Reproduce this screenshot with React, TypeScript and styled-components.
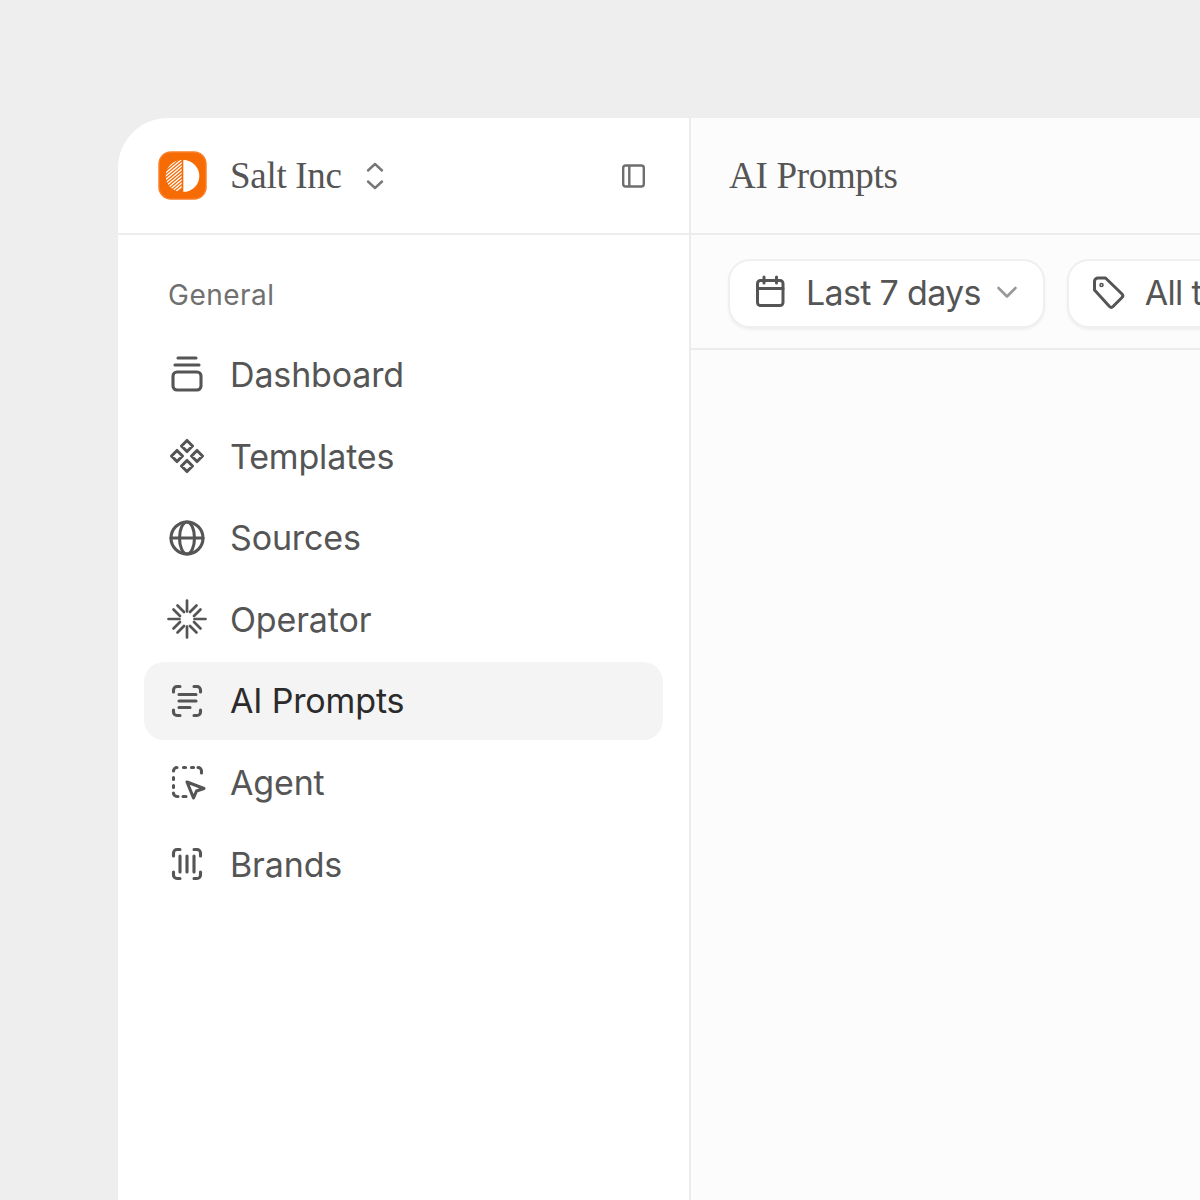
import styled, { createGlobalStyle } from 'styled-components'
import { ReactNode } from 'react'

const GlobalStyle = createGlobalStyle`
  html, body {
    margin: 0;
    padding: 0;
    background: #eeeeee;
    overflow: hidden;
  }
  * {
    box-sizing: border-box;
  }
`

const Page = styled.div`
  width: 1200px;
  height: 1200px;
  padding: 118px 0 0 118px;
  overflow: hidden;
`

const Shell = styled.div`
  display: flex;
  width: 1082px;
  height: 1082px;
  border-top-left-radius: 50px;
  overflow: hidden;
  font-family: Inter, "Liberation Sans", sans-serif;
`

const Sidebar = styled.aside`
  flex: 0 0 573px;
  background: #fff;
  border-right: 2px solid #ececec;
`

const SidebarHead = styled.header`
  display: flex;
  align-items: center;
  height: 117px;
  padding: 0 42px 0 40px;
  border-bottom: 2px solid #ececec;
`

const OrgName = styled.span`
  margin-left: 23px;
  font-family: "Liberation Serif", serif;
  font-size: 37px;
  letter-spacing: -0.3px;
  color: #555;
`

const OrgSwitch = styled.svg`
  margin-left: 21px;
  width: 24px;
  height: 30px;
`

const Collapse = styled.svg`
  margin-left: auto;
  width: 28px;
  height: 28px;
`

const Nav = styled.nav`
  display: flex;
  flex-direction: column;
  padding: 43px 26px 0 26px;
`

const NavLabel = styled.div`
  padding-left: 24px;
  margin-bottom: 24px;
  font-size: 28px;
  line-height: 34px;
  letter-spacing: 0.5px;
  color: #707070;
`

const NavList = styled.div`
  display: flex;
  flex-direction: column;
  gap: 3.6px;
`

const NavItem = styled.a<{ $active?: boolean }>`
  display: flex;
  align-items: center;
  gap: 23px;
  height: 78px;
  padding: 0 0 1px 23px;
  border-radius: 20px;
  font-size: 34px;
  letter-spacing: -0.15px;
  color: ${(p) => (p.$active ? '#2b2b2b' : '#555')};
  background: ${(p) => (p.$active ? '#f4f4f4' : 'transparent')};
`

const NavIcon = styled.svg`
  flex: none;
  width: 40px;
  height: 40px;
  color: #555;
  fill: none;
  stroke: currentColor;
  stroke-width: 3.1;
  stroke-linecap: round;
  stroke-linejoin: round;
`

const Main = styled.main`
  flex: 1;
  min-width: 0;
  background: #fcfcfc;
`

const MainHead = styled.header`
  display: flex;
  align-items: center;
  height: 117px;
  padding-left: 38px;
  border-bottom: 2px solid #ececec;
`

const Title = styled.h1`
  margin: 0;
  font-family: "Liberation Serif", serif;
  font-size: 37px;
  font-weight: 400;
  letter-spacing: -0.3px;
  color: #555;
`

const Filters = styled.div`
  display: flex;
  gap: 22px;
  height: 115px;
  padding: 23.5px 0 0 37px;
  border-bottom: 2px solid #ececec;
  overflow: hidden;
`

const FilterButton = styled.div`
  flex: none;
  display: flex;
  align-items: center;
  height: 69px;
  padding: 0 25px 2px 24px;
  background: #fff;
  border: 2px solid #efefef;
  border-radius: 22px;
  box-shadow: 0 2px 3px rgba(0, 0, 0, 0.05);
  font-size: 34px;
  letter-spacing: -0.68px;
  color: #555;
`

const FilterIcon = styled.svg`
  flex: none;
  width: 34px;
  height: 34px;
  margin-right: 18px;
  fill: none;
  stroke: #555;
  stroke-width: 3;
  stroke-linecap: round;
  stroke-linejoin: round;
`

const Caret = styled.svg`
  margin-left: 15px;
  width: 22px;
  height: 14px;
`

const Logo = () => (
  <svg width="49" height="49" viewBox="0 0 49 49">
    <defs>
      <clipPath id="half">
        <path d="M23.700 9a16 16 0 0 0 0 32z" />
      </clipPath>
    </defs>
    <rect x="1" y="1" width="47" height="47" rx="12" fill="#f76b05" stroke="#fb7f28" strokeWidth="1.5" />
    <g clipPath="url(#half)" stroke="#fff" strokeWidth="1.3">
      {[0, 1, 2, 3, 4, 5, 6, 7, 8, 9, 10].map((i) => (
        <line key={i} x1={4} y1={18 + i * 3.4} x2={28} y2={-2 + i * 3.4} />
      ))}
    </g>
    <path d="M25.300 9a16 16 0 0 1 0 32z" fill="#fff" />
  </svg>
)

const icons: Record<string, ReactNode> = {
  dashboard: (
    <>
      <path d="M11 3h18M8 10h24" />
      <rect x="6" y="17" width="28" height="18" rx="4" />
    </>
  ),
  templates: (
    <>
      <path d="M20 4.500l5.500 5.500-5.500 5.500-5.500-5.500zM10 14.500l5.500 5.500-5.500 5.500-5.500-5.500zM30 14.500l5.500 5.500-5.500 5.500-5.500-5.500zM20 24.500l5.500 5.500-5.500 5.500-5.500-5.500z" />
    </>
  ),
  sources: (
    <>
      <circle cx="20" cy="20" r="16" />
      <ellipse cx="20" cy="20" rx="7.500" ry="16" />
      <path d="M4 20h32" />
    </>
  ),
  operator: (
    <g strokeWidth="2.7">
      <path d="M20 1.500v11M20 27.500v11M1.500 20h11M27.500 20h11" />
      <path d="M6.500 10.500l6.500 6.500M10.500 6.500l6.500 6.500M29.500 6.500l-6.500 6.500M33.500 10.500l-6.500 6.500M6.500 29.500l6.500-6.500M10.500 33.500l6.500-6.500M29.500 33.500l-6.500-6.500M33.500 29.500l-6.500-6.500" />
    </g>
  ),
  prompts: (
    <>
      <path d="M6.500 11V9a3.500 3.500 0 0 1 3.500-3.500h3M27 5.500h3a3.500 3.500 0 0 1 3.500 3.500v2M6.500 29v2a3.500 3.500 0 0 0 3.500 3.500h3M27 34.500h3a3.500 3.500 0 0 0 3.500-3.500v-2" />
      <path d="M12 13.500h17M12 20h17M12 26.500h11" />
    </>
  ),
  agent: (
    <>
      <path d="M6.500 9a3.500 3.500 0 0 1 3.500-3.500M16.500 5.500h2M24.500 5.500h2M31 5.500a3.500 3.500 0 0 1 3.500 3.500v2M6.500 15.500v2M6.500 23.500v2M6.500 31a3.500 3.500 0 0 0 3.500 3.500h1M16 34.500h3" />
      <path d="M20 20l17 6.500-7.500 2.500-3 7z" />
    </>
  ),
  brands: (
    <>
      <path d="M6.500 12V9a3.500 3.500 0 0 1 3.500-3.500h3M27 5.500h3a3.500 3.500 0 0 1 3.500 3.500v3M6.500 28v3a3.500 3.500 0 0 0 3.500 3.500h3M27 34.500h3a3.500 3.500 0 0 0 3.500-3.500v-3" />
      <path d="M13 12v16M20 12v16M27 12v16" />
    </>
  ),
}

const items = [
  { key: 'dashboard', label: 'Dashboard' },
  { key: 'templates', label: 'Templates' },
  { key: 'sources', label: 'Sources' },
  { key: 'operator', label: 'Operator' },
  { key: 'prompts', label: 'AI Prompts', active: true },
  { key: 'agent', label: 'Agent' },
  { key: 'brands', label: 'Brands' },
]

export default function App() {
  return (
    <Page>
      <GlobalStyle />
      <Shell>
        <Sidebar>
          <SidebarHead>
            <Logo />
            <OrgName>Salt Inc</OrgName>
            <OrgSwitch viewBox="0 0 24 30" fill="none" stroke="#777" strokeWidth="2.4" strokeLinecap="round" strokeLinejoin="round">
              <path d="M5 9.500L12 3l7 6.500M5 20.500L12 27l7-6.500" />
            </OrgSwitch>
            <Collapse viewBox="0 0 28 28" fill="none" stroke="#6e6e6e" strokeWidth="2.4" strokeLinejoin="round">
              <rect x="4.200" y="3.500" width="20.600" height="21" rx="2.500" />
              <path d="M10.300 3.500v21" />
            </Collapse>
          </SidebarHead>
          <Nav>
            <NavLabel>General</NavLabel>
            <NavList>
              {items.map((item) => (
                <NavItem key={item.key} $active={item.active}>
                  <NavIcon viewBox="0 0 40 40">{icons[item.key]}</NavIcon>
                  {item.label}
                </NavItem>
              ))}
            </NavList>
          </Nav>
        </Sidebar>
        <Main>
          <MainHead>
            <Title>AI Prompts</Title>
          </MainHead>
          <Filters>
            <FilterButton>
              <FilterIcon viewBox="0 0 34 34">
                <rect x="3.500" y="5.500" width="25.500" height="25" rx="3" />
                <path d="M3.500 13.500h25.500M10 2v6M22.500 2v6" />
              </FilterIcon>
              Last 7 days
              <Caret viewBox="0 0 22 14" fill="none" stroke="#999" strokeWidth="2.6" strokeLinecap="round" strokeLinejoin="round">
                <path d="M2.500 3l8.500 8.500L19.500 3" />
              </Caret>
            </FilterButton>
            <FilterButton>
              <FilterIcon viewBox="1.500 0 34 34">
                <path d="M3 6.500A3.500 3.500 0 0 1 6.500 3H14l16.500 16a2.500 2.500 0 0 1 0 3.500l-9 9a2.500 2.500 0 0 1-3.500 0L3 15z" />
                <circle cx="10" cy="10" r="0.800" />
              </FilterIcon>
              All tags
            </FilterButton>
          </Filters>
        </Main>
      </Shell>
    </Page>
  )
}
